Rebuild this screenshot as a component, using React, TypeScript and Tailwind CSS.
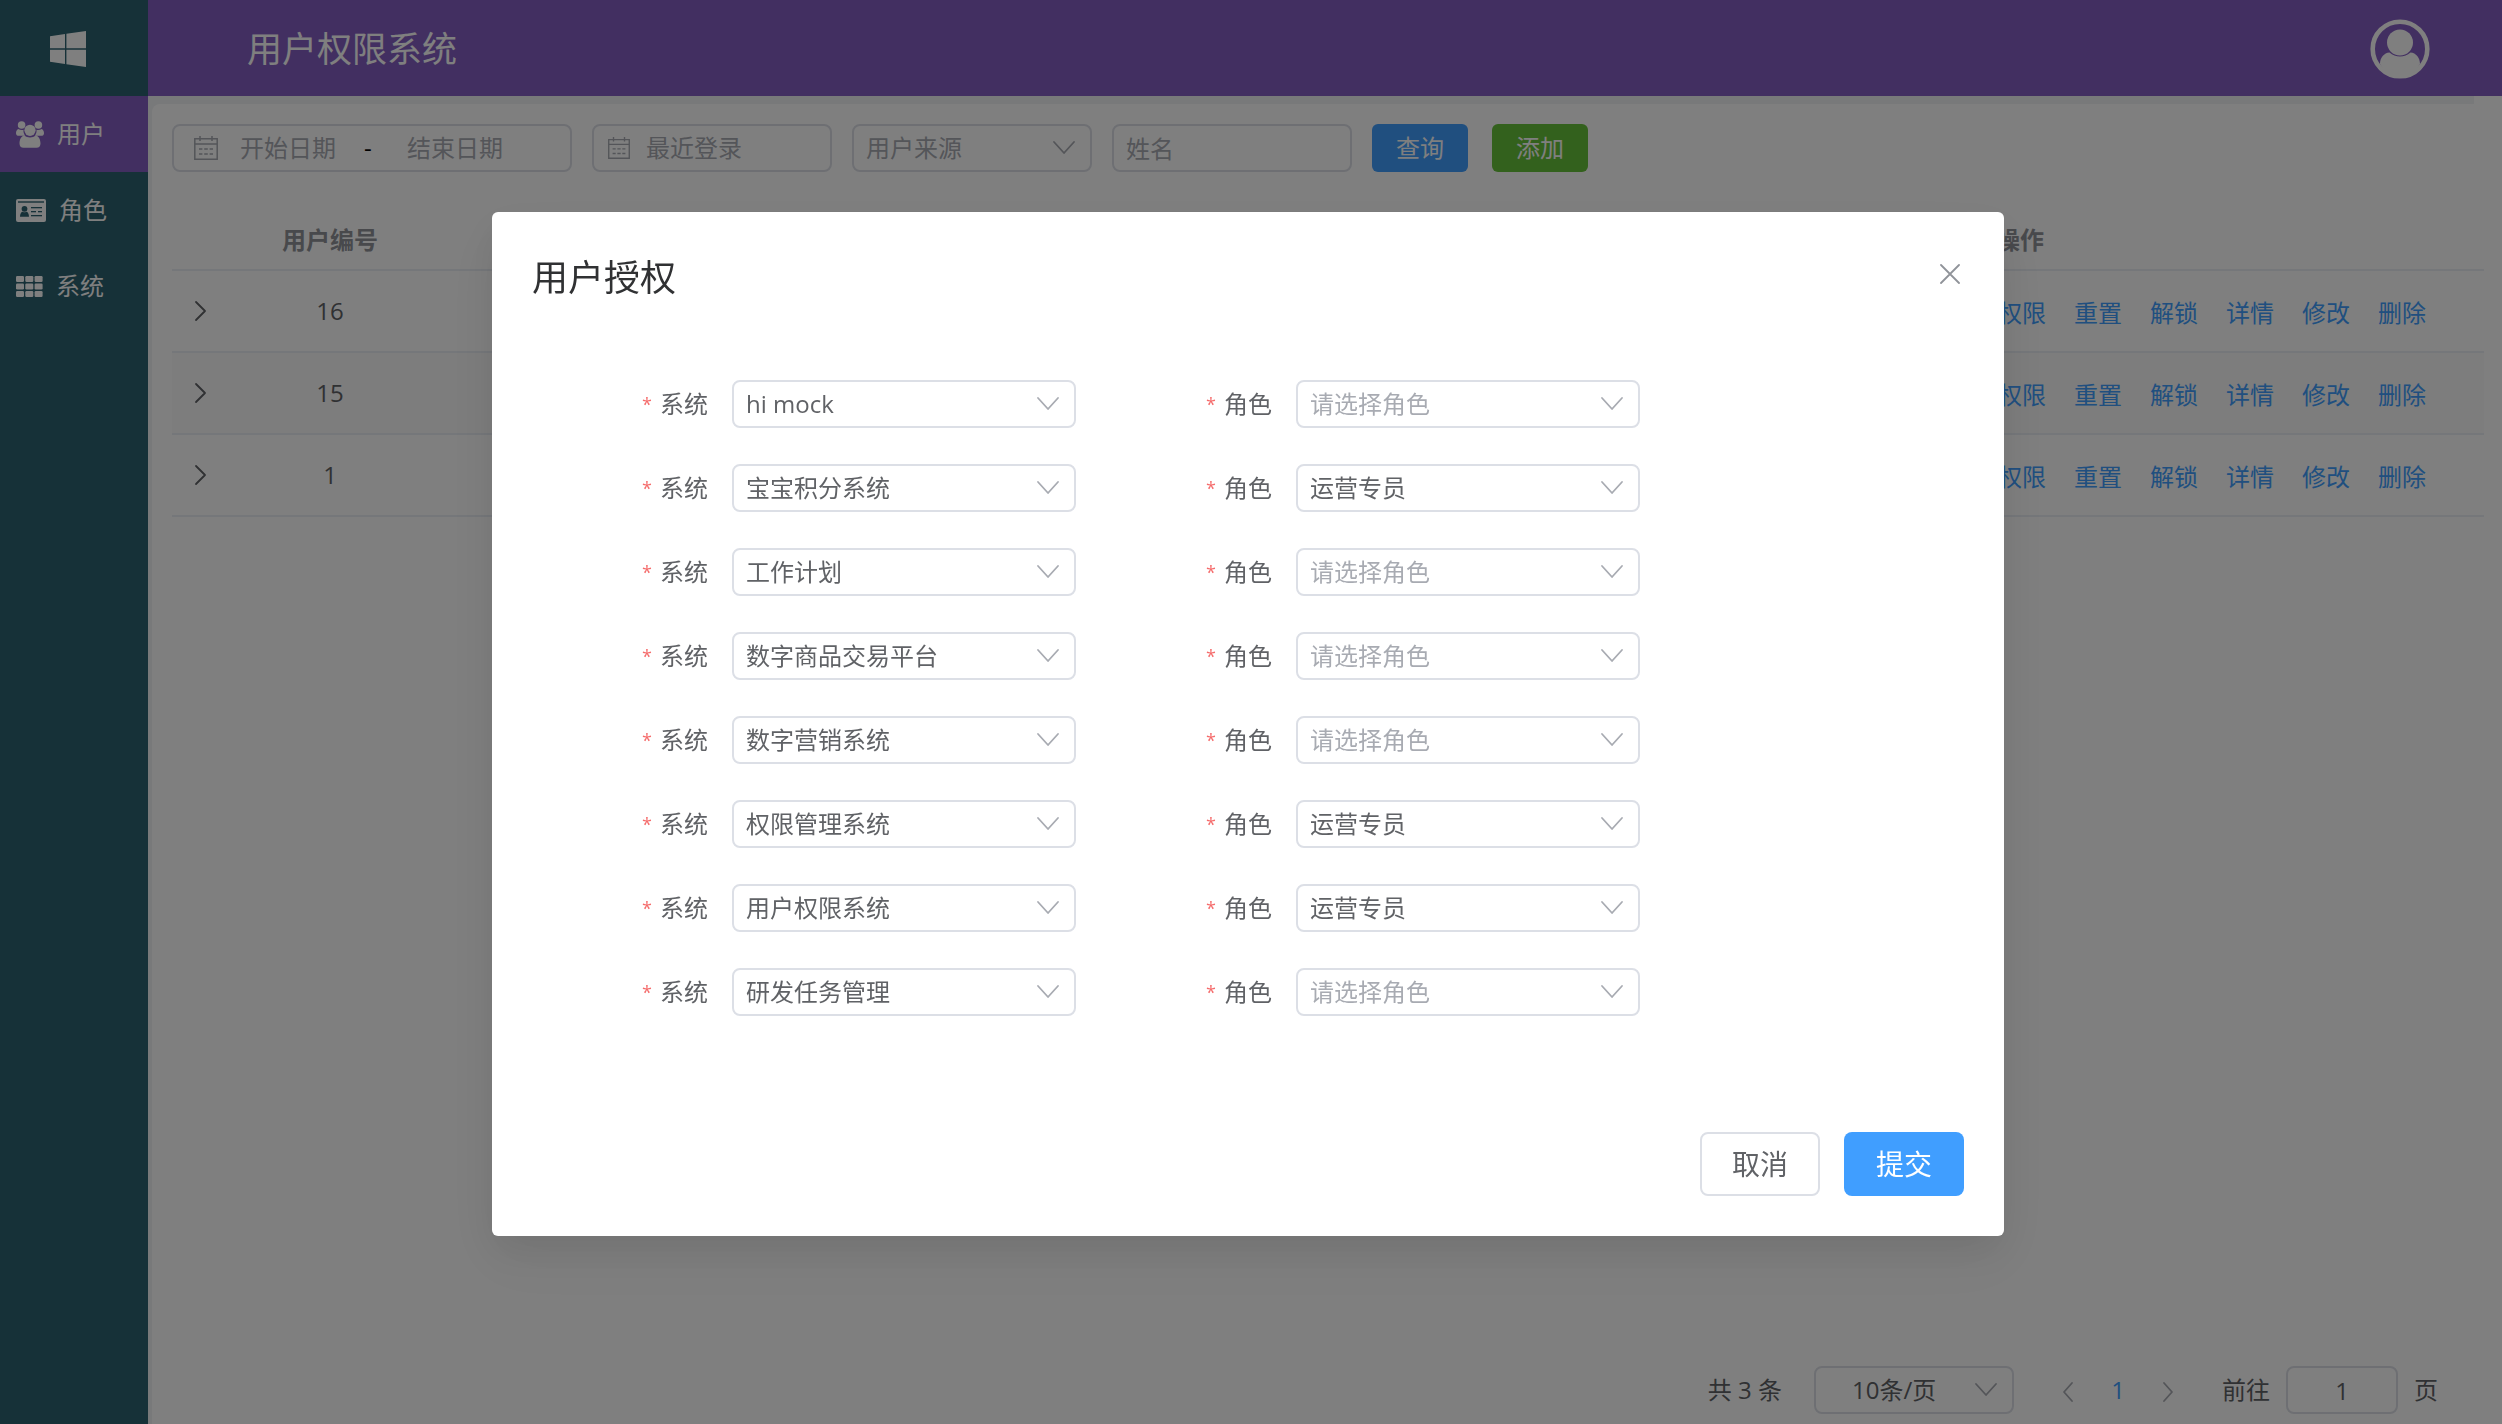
import type { ReactNode } from "react";

function Chevron({ className = "", d = "M4 10 14 21 24 10" }: { className?: string; d?: string }) {
  return (
    <svg viewBox="0 0 28 28" className={"h-7 w-7 " + className} fill="none" stroke="currentColor" strokeWidth="1.8" strokeLinecap="round" strokeLinejoin="round" aria-hidden="true">
      <path d={d} />
    </svg>
  );
}

function CalendarIcon({ className }: { className: string }) {
  return (
    <svg viewBox="0 0 24 24" className={className} fill="none" stroke="currentColor" strokeWidth="1.5" aria-hidden="true">
      <path d="M.8 2.8h22.4v20.4H.8zM.8 8h22.4M6 0v5M18 0v5" />
      <path d="M5 13h3.4M10.2 13h3.6M15.6 13H19M5 18h3.4M10.2 18h3.6M15.6 18H19" />
    </svg>
  );
}

function WindowsIcon() {
  return (
    <svg viewBox="0 0 36 36" className="h-9 w-9" fill="currentColor" aria-hidden="true">
      <path d="M0 5.2 15 3v14.2H0zM16.4 2.8 36 0v17.2H16.4zM0 18.8h15V33L0 30.8zM16.4 18.8H36V36l-19.6-2.8z" />
    </svg>
  );
}

function UsersIcon() {
  return (
    <svg viewBox="0 0 28 27" className="h-[27px] w-7" fill="currentColor" aria-hidden="true">
      <circle cx="5.6" cy="4" r="3.8" />
      <circle cx="22.4" cy="4" r="3.8" />
      <circle cx="14" cy="9.3" r="5.6" />
      <path d="M2.2 8c1.6 1 4 1.3 5.3.8-.3 2.4.4 4.4 1.8 6H3C1 14.8 0 13.8 0 12.2 0 10.4.7 8.6 2.2 8zM25.8 8c-1.6 1-4 1.3-5.3.8.3 2.4-.4 4.4-1.8 6H25c2 0 3-1 3-2.600 0-1.800-.7-3.600-2.200-4.200z" />
      <path d="M8.2 14.5c3.3 2.6 8.3 2.6 11.6 0 3 .5 4.700 4 4.700 8 0 2.800-1.500 4.200-4 4.200h-13c-2.500 0-4-1.400-4-4.200 0-4 1.700-7.500 4.700-8z" />
    </svg>
  );
}

function CardIcon() {
  return (
    <svg viewBox="0 0 30 23" className="h-[23px] w-[30px]" aria-hidden="true">
      <rect width="30" height="23" rx="2" fill="currentColor" />
      <g fill="#2c6270">
        <rect x="2" y="2.3" width="26" height="1.4" />
        <circle cx="8.5" cy="9.8" r="2.9" />
        <path d="M4 17.7c0-3 1.2-5 2.8-5 1 .8 2.4.8 3.4 0 1.6 0 2.8 2 2.8 5z" />
        <rect x="15" y="8" width="11" height="1.3" />
        <rect x="15" y="12" width="5" height="1.3" />
        <rect x="22" y="12" width="4" height="1.3" />
        <rect x="15" y="16" width="11" height="1.3" />
      </g>
    </svg>
  );
}

function GridIcon() {
  return (
    <svg viewBox="0 0 27 21" className="h-[21px] w-[27px]" fill="currentColor" aria-hidden="true">
      {[0, 7.5, 15].map((y) => [0, 9.3, 18.6].map((x) => <rect key={x + "-" + y} x={x} y={y} width="8" height="6" rx="1.2" />))}
    </svg>
  );
}

function AvatarIcon() {
  return (
    <svg viewBox="0 0 60 60" className="h-[60px] w-[60px]" aria-hidden="true">
      <circle cx="30" cy="30" r="27.3" fill="none" stroke="currentColor" strokeWidth="4.6" />
      <circle cx="30" cy="23.5" r="13" fill="currentColor" />
      <path fill="currentColor" d="M19.5 33.5c6 5.3 15 5.3 21 0 5.5.5 9.5 5 9.5 11.5C45.5 53 38.5 58 30 58S14.500 53 10 45c0-6.500 4-11 9.500-11.500z" />
    </svg>
  );
}

const field = "h-12 rounded-lg border-2 border-[#dcdfe6] bg-white text-2xl";

function Select({ id, label, value, placeholder, className }: { id: string; label?: string; value?: string; placeholder?: string; className: string }) {
  return (
    <div className={"relative " + className}>
      <select id={id} aria-label={label} className={field + " w-full appearance-none pl-3 pr-12 " + (value ? "text-[#606266]" : "text-[#a8abb2]")}>
        <option>{value || placeholder}</option>
      </select>
      <Chevron className="pointer-events-none absolute right-3.5 top-2 text-[#a8abb2]" />
    </div>
  );
}

const menu: { name: string; icon: ReactNode; active?: boolean }[] = [
  { name: "用户", icon: <UsersIcon />, active: true },
  { name: "角色", icon: <CardIcon /> },
  { name: "系统", icon: <GridIcon /> },
];

const users = [16, 15, 1];
const actions = ["权限", "重置", "解锁", "详情", "修改", "删除"];

const grants: { system: string; role?: string }[] = [
  { system: "hi mock" },
  { system: "宝宝积分系统", role: "运营专员" },
  { system: "工作计划" },
  { system: "数字商品交易平台" },
  { system: "数字营销系统" },
  { system: "权限管理系统", role: "运营专员" },
  { system: "用户权限系统", role: "运营专员" },
  { system: "研发任务管理" },
];

function Sidebar() {
  return (
    <aside className="w-[148px] shrink-0 bg-[#2c6270] text-white">
      <div className="flex h-24 items-center pl-[50px] pt-0.5">
        <WindowsIcon />
      </div>
      <nav>
        {menu.map((m) => (
          <a key={m.name} href="#" className={"flex h-[76px] items-center gap-[13px] pl-4 text-2xl " + (m.active ? "bg-[#845ec2]" : "")}>
            {m.icon}
            {m.name}
          </a>
        ))}
      </nav>
    </aside>
  );
}

function Filters() {
  return (
    <form className="flex gap-5" onSubmit={(e) => e.preventDefault()}>
      <div className={field + " flex w-[400px] items-center pl-5 text-black"}>
        <CalendarIcon className="h-6 w-6 shrink-0 text-[#a8abb2]" />
        <input aria-label="开始日期" placeholder="开始日期" className="ml-[22px] w-[112px] placeholder:text-[#a8abb2]" />
        <span className="-ml-4 w-[71px] pl-7">-</span>
        <input aria-label="结束日期" placeholder="结束日期" className="w-[112px] placeholder:text-[#a8abb2]" />
      </div>
      <div className={field + " flex w-60 items-center pl-3.5 text-[#606266]"}>
        <CalendarIcon className="h-[22px] w-[22px] shrink-0 text-[#a8abb2]" />
        <input aria-label="最近登录" placeholder="最近登录" className="ml-4 w-40 placeholder:text-[#a8abb2]" />
      </div>
      <Select id="source" label="用户来源" placeholder="用户来源" className="w-60" />
      <input aria-label="姓名" placeholder="姓名" className={field + " w-60 px-3 text-[#606266] placeholder:text-[#a8abb2]"} />
      <div className="flex gap-6">
        <button className="h-12 w-24 rounded-md bg-[#409eff] text-2xl text-white">查询</button>
        <button type="button" className="h-12 w-24 rounded-md bg-[#67c23a] text-2xl text-white">添加</button>
      </div>
    </form>
  );
}

function UserTable() {
  return (
    <table className="mt-[38px] w-full table-fixed border-collapse text-2xl text-[#606266]">
      <thead>
        <tr className="h-[60px] border-b-2 border-[#ebeef5] text-[#909399]">
          <th className="w-14" aria-label="展开" />
          <th className="w-[204px] font-bold">用户编号</th>
          <th />
          <th className="w-[928px] font-bold">操作</th>
        </tr>
      </thead>
      <tbody>
        {users.map((u, i) => (
          <tr key={u} className={"h-[82px] border-b-2 border-[#ebeef5] " + (i === 1 ? "bg-[#fafafa]" : "")}>
            <td>
              <button aria-label="展开" className="flex w-14 justify-center">
                <Chevron d="M10 5 19 14 10 23" />
              </button>
            </td>
            <td className="text-center">{u}</td>
            <td />
            <td>
              <div className="flex justify-end gap-7 pr-[58px] pt-1 text-[#409eff]">
                {actions.map((a) => (
                  <button key={a}>{a}</button>
                ))}
              </div>
            </td>
          </tr>
        ))}
      </tbody>
    </table>
  );
}

function Pagination() {
  return (
    <div className="mt-auto flex items-center justify-end pb-2.5 pr-[46px] text-2xl text-[#606266]">
      <span>共 3 条</span>
      <div className="relative ml-8 w-[200px]">
        <select aria-label="每页条数" className={field + " w-full appearance-none pl-9 pr-12"}>
          <option>10条/页</option>
        </select>
        <Chevron className="pointer-events-none absolute right-3.5 top-2 text-[#a8abb2]" />
      </div>
      <button aria-label="上一页" className="ml-10 text-[#a8abb2]">
        <Chevron d="M18 7 10 16 18 25" />
      </button>
      <button className="mx-6 w-6 text-[#409eff]">1</button>
      <button aria-label="下一页" className="text-[#a8abb2]">
        <Chevron d="M10 7 18 16 10 25" />
      </button>
      <label htmlFor="page" className="ml-10">前往</label>
      <input id="page" defaultValue="1" className={field + " mx-4 w-28 text-center"} />
      <span>页</span>
    </div>
  );
}

function GrantField({ id, label, value, placeholder }: { id: string; label: string; value?: string; placeholder?: string }) {
  return (
    <div className="flex w-[544px]">
      <label htmlFor={id} className="flex h-12 w-[200px] items-center justify-end gap-2 pr-6 text-2xl text-[#606266]">
        <span className="text-lg text-[#f56c6c]">*</span>
        {label}
      </label>
      <Select id={id} value={value} placeholder={placeholder} className="flex-1" />
    </div>
  );
}

function GrantDialog() {
  return (
    <div className="fixed inset-0 flex items-start justify-center bg-black/50 pr-1.5 pt-[212px]">
      <section role="dialog" aria-modal="true" aria-labelledby="grant-title" className="w-[1512px] max-w-full rounded-md bg-white p-10 shadow-[0_24px_64px_8px_rgba(0,0,0,0.04),0_16px_40px_rgba(0,0,0,0.08)]">
        <header className="flex items-start justify-between">
          <h2 id="grant-title" className="text-4xl leading-[52px] text-[#303133]">用户授权</h2>
          <button aria-label="关闭" className="flex h-11 w-7 items-center justify-center text-[#909399]">
            <svg viewBox="0 0 20 20" className="h-5 w-5" fill="none" stroke="currentColor" strokeWidth="1.8" strokeLinecap="round" aria-hidden="true">
              <path d="M1 1 19 19M19 1 1 19" />
            </svg>
          </button>
        </header>
        <form className="mt-[76px] flex flex-col gap-9">
          {grants.map((g, i) => (
            <div key={g.system} className="flex gap-5">
              <GrantField id={"system-" + i} label="系统" value={g.system} />
              <GrantField id={"role-" + i} label="角色" value={g.role} placeholder="请选择角色" />
            </div>
          ))}
        </form>
        <footer className="mt-[116px] flex justify-end gap-6 text-[28px]">
          <button className="h-16 w-[120px] rounded-lg border-2 border-[#dcdfe6] text-[#606266]">取消</button>
          <button className="h-16 w-[120px] rounded-lg bg-[#409eff] text-white">提交</button>
        </footer>
      </section>
    </div>
  );
}

export default function App() {
  return (
    <div className="flex min-h-screen bg-white font-['Open_Sans','Noto_Sans_CJK_SC',sans-serif]">
      <Sidebar />
      <div className="flex min-w-0 flex-1 flex-col">
        <header className="flex h-24 items-center justify-between bg-[#845ec2] pl-[99px] pr-[72px] pt-0.5 text-white">
          <h1 className="text-[35px]">用户权限系统</h1>
          <button aria-label="个人中心">
            <AvatarIcon />
          </button>
        </header>
        <div className="mr-7 h-2 bg-[#f0f2f5]" />
        <div className="flex flex-1 bg-[#f0f2f5] pl-1">
          <main className="flex min-w-0 flex-1 flex-col rounded-tl-lg bg-white pl-5 pr-[18px] pt-5">
            <Filters />
            <UserTable />
            <Pagination />
          </main>
        </div>
      </div>
      <GrantDialog />
    </div>
  );
}
